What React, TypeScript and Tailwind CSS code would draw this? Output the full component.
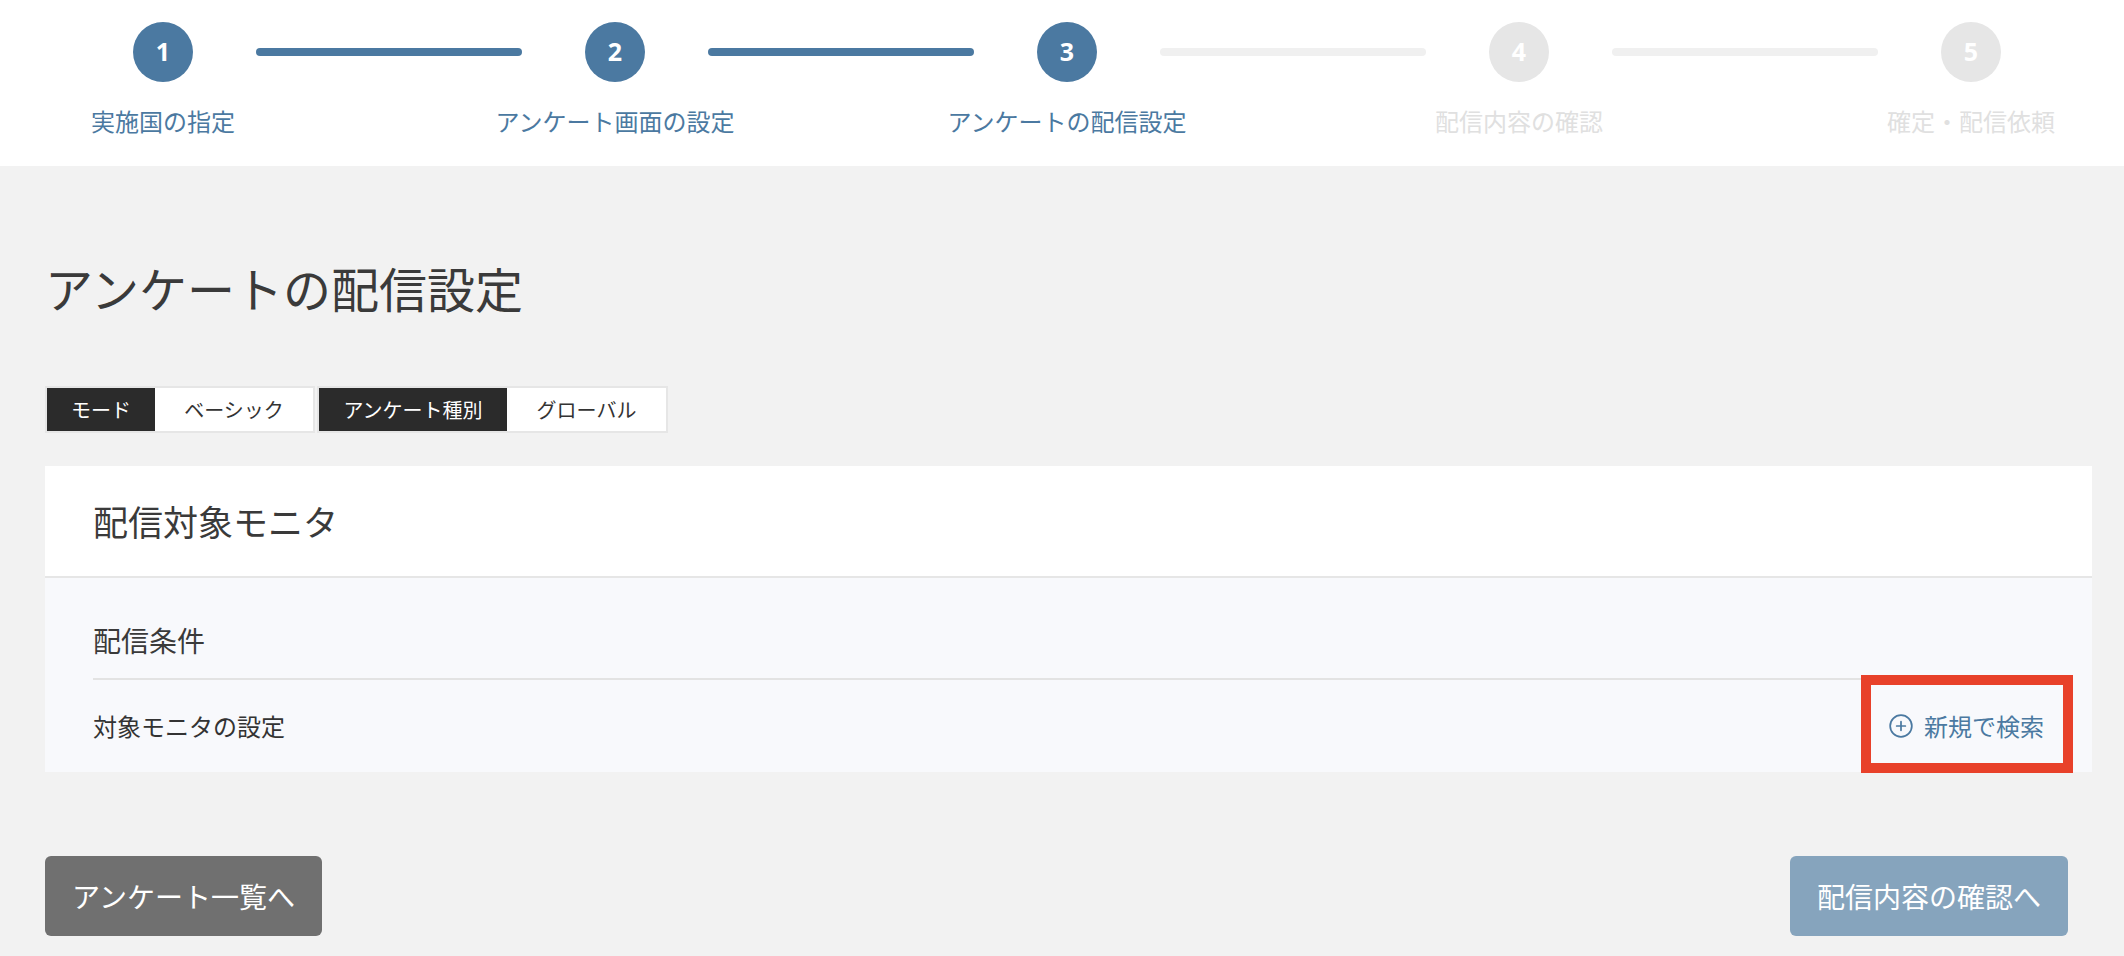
import { CirclePlus } from "lucide-react";

const steps = [
  { n: 1, label: "実施国の指定", done: true },
  { n: 2, label: "アンケート画面の設定", done: true },
  { n: 3, label: "アンケートの配信設定", done: true },
  { n: 4, label: "配信内容の確認", done: false },
  { n: 5, label: "確定・配信依頼", done: false },
];

const jp = { fontFamily: '"Noto Sans CJK JP", "Noto Sans", sans-serif' };

function Stepper() {
  return (
    <div className="bg-white pt-[22px] pb-[27px] pl-[133px] pr-[123px]">
      <div className="flex items-start">
        {steps.map((s, i) => (
          <div key={s.n} className="contents">
            {i > 0 && (
              <div
                className={
                  "flex-1 mx-[63px] mt-[26px] h-[8px] rounded-full " +
                  (s.done ? "bg-[#4b79a1]" : "bg-[#f0f0f0]")
                }
              />
            )}
            <div className="w-[60px] flex flex-col items-center">
              <div
                className={
                  "w-[60px] h-[60px] rounded-full flex items-center justify-center text-white text-[25px] font-bold " +
                  (s.done ? "bg-[#4b79a1]" : "bg-[#e6e6e6]")
                }
                style={{ fontFamily: '"Open Sans", sans-serif' }}
              >
                {s.n}
              </div>
              <div
                className={
                  "mt-[21px] whitespace-nowrap text-[24px] leading-[36px] " +
                  (s.done ? "text-[#4b79a1]" : "text-[#e0e0e0]")
                }
              >
                {s.label}
              </div>
            </div>
          </div>
        ))}
      </div>
    </div>
  );
}

export default function App() {
  return (
    <div className="min-h-screen bg-[#f2f2f2] text-[#333]" style={jp}>
      <Stepper />

      <div className="pl-[45px] pr-[32px]">
        <h1 className="mt-[90px] text-[48px] leading-[62px] text-[#3a3a3a] font-normal">
          アンケートの配信設定
        </h1>

        <div className="mt-[68px] flex gap-[2px] text-[20px]">
          <div className="flex border-2 border-[#e6e6e6] bg-white">
            <div className="w-[108px] h-[43px] flex items-center justify-center bg-[#2b2b2b] text-white">モード</div>
            <div className="w-[158px] h-[43px] flex items-center justify-center text-[#333]">ベーシック</div>
          </div>
          <div className="flex border-2 border-[#e6e6e6] bg-white">
            <div className="w-[188px] h-[43px] flex items-center justify-center bg-[#2b2b2b] text-white">アンケート種別</div>
            <div className="w-[159px] h-[43px] flex items-center justify-center text-[#333]">グローバル</div>
          </div>
        </div>

        <div className="mt-[33px]">
          <div className="h-[112px] bg-white px-[48px] flex items-center border-b-2 border-[#e6e6e6]">
            <h2 className="text-[35px] text-[#3a3a3a] font-normal">配信対象モニタ</h2>
          </div>
          <div className="bg-[#f8f9fc] px-[48px]">
            <div className="pt-[42px] pb-[18px] border-b-2 border-[#e3e3e3]">
              <h3 className="text-[28px] leading-[40px] text-[#3a3a3a] font-normal">配信条件</h3>
            </div>
            <div className="h-[92px] flex items-center justify-between">
              <span className="text-[24px] text-[#333]">対象モニタの設定</span>
              <div className="relative">
                <button className="flex items-center gap-[10px] h-[36px] text-[24px] text-[#4b79a1]">
                  <CirclePlus size={26} strokeWidth={1.6} />
                  新規で検索
                </button>
                <div className="absolute -left-[27px] -right-[29px] -top-[33px] -bottom-[29px] border-[10px] border-[#e8412a] pointer-events-none" />
              </div>
            </div>
          </div>
        </div>

        <div className="mt-[84px] flex justify-between pr-[24px]">
          <button className="h-[80px] px-[27px] rounded-[6px] bg-[#707070] text-white text-[28px]">
            アンケート一覧へ
          </button>
          <button className="h-[80px] px-[27px] rounded-[6px] bg-[#86a4bd] text-white text-[28px]">
            配信内容の確認へ
          </button>
        </div>
      </div>
    </div>
  );
}
